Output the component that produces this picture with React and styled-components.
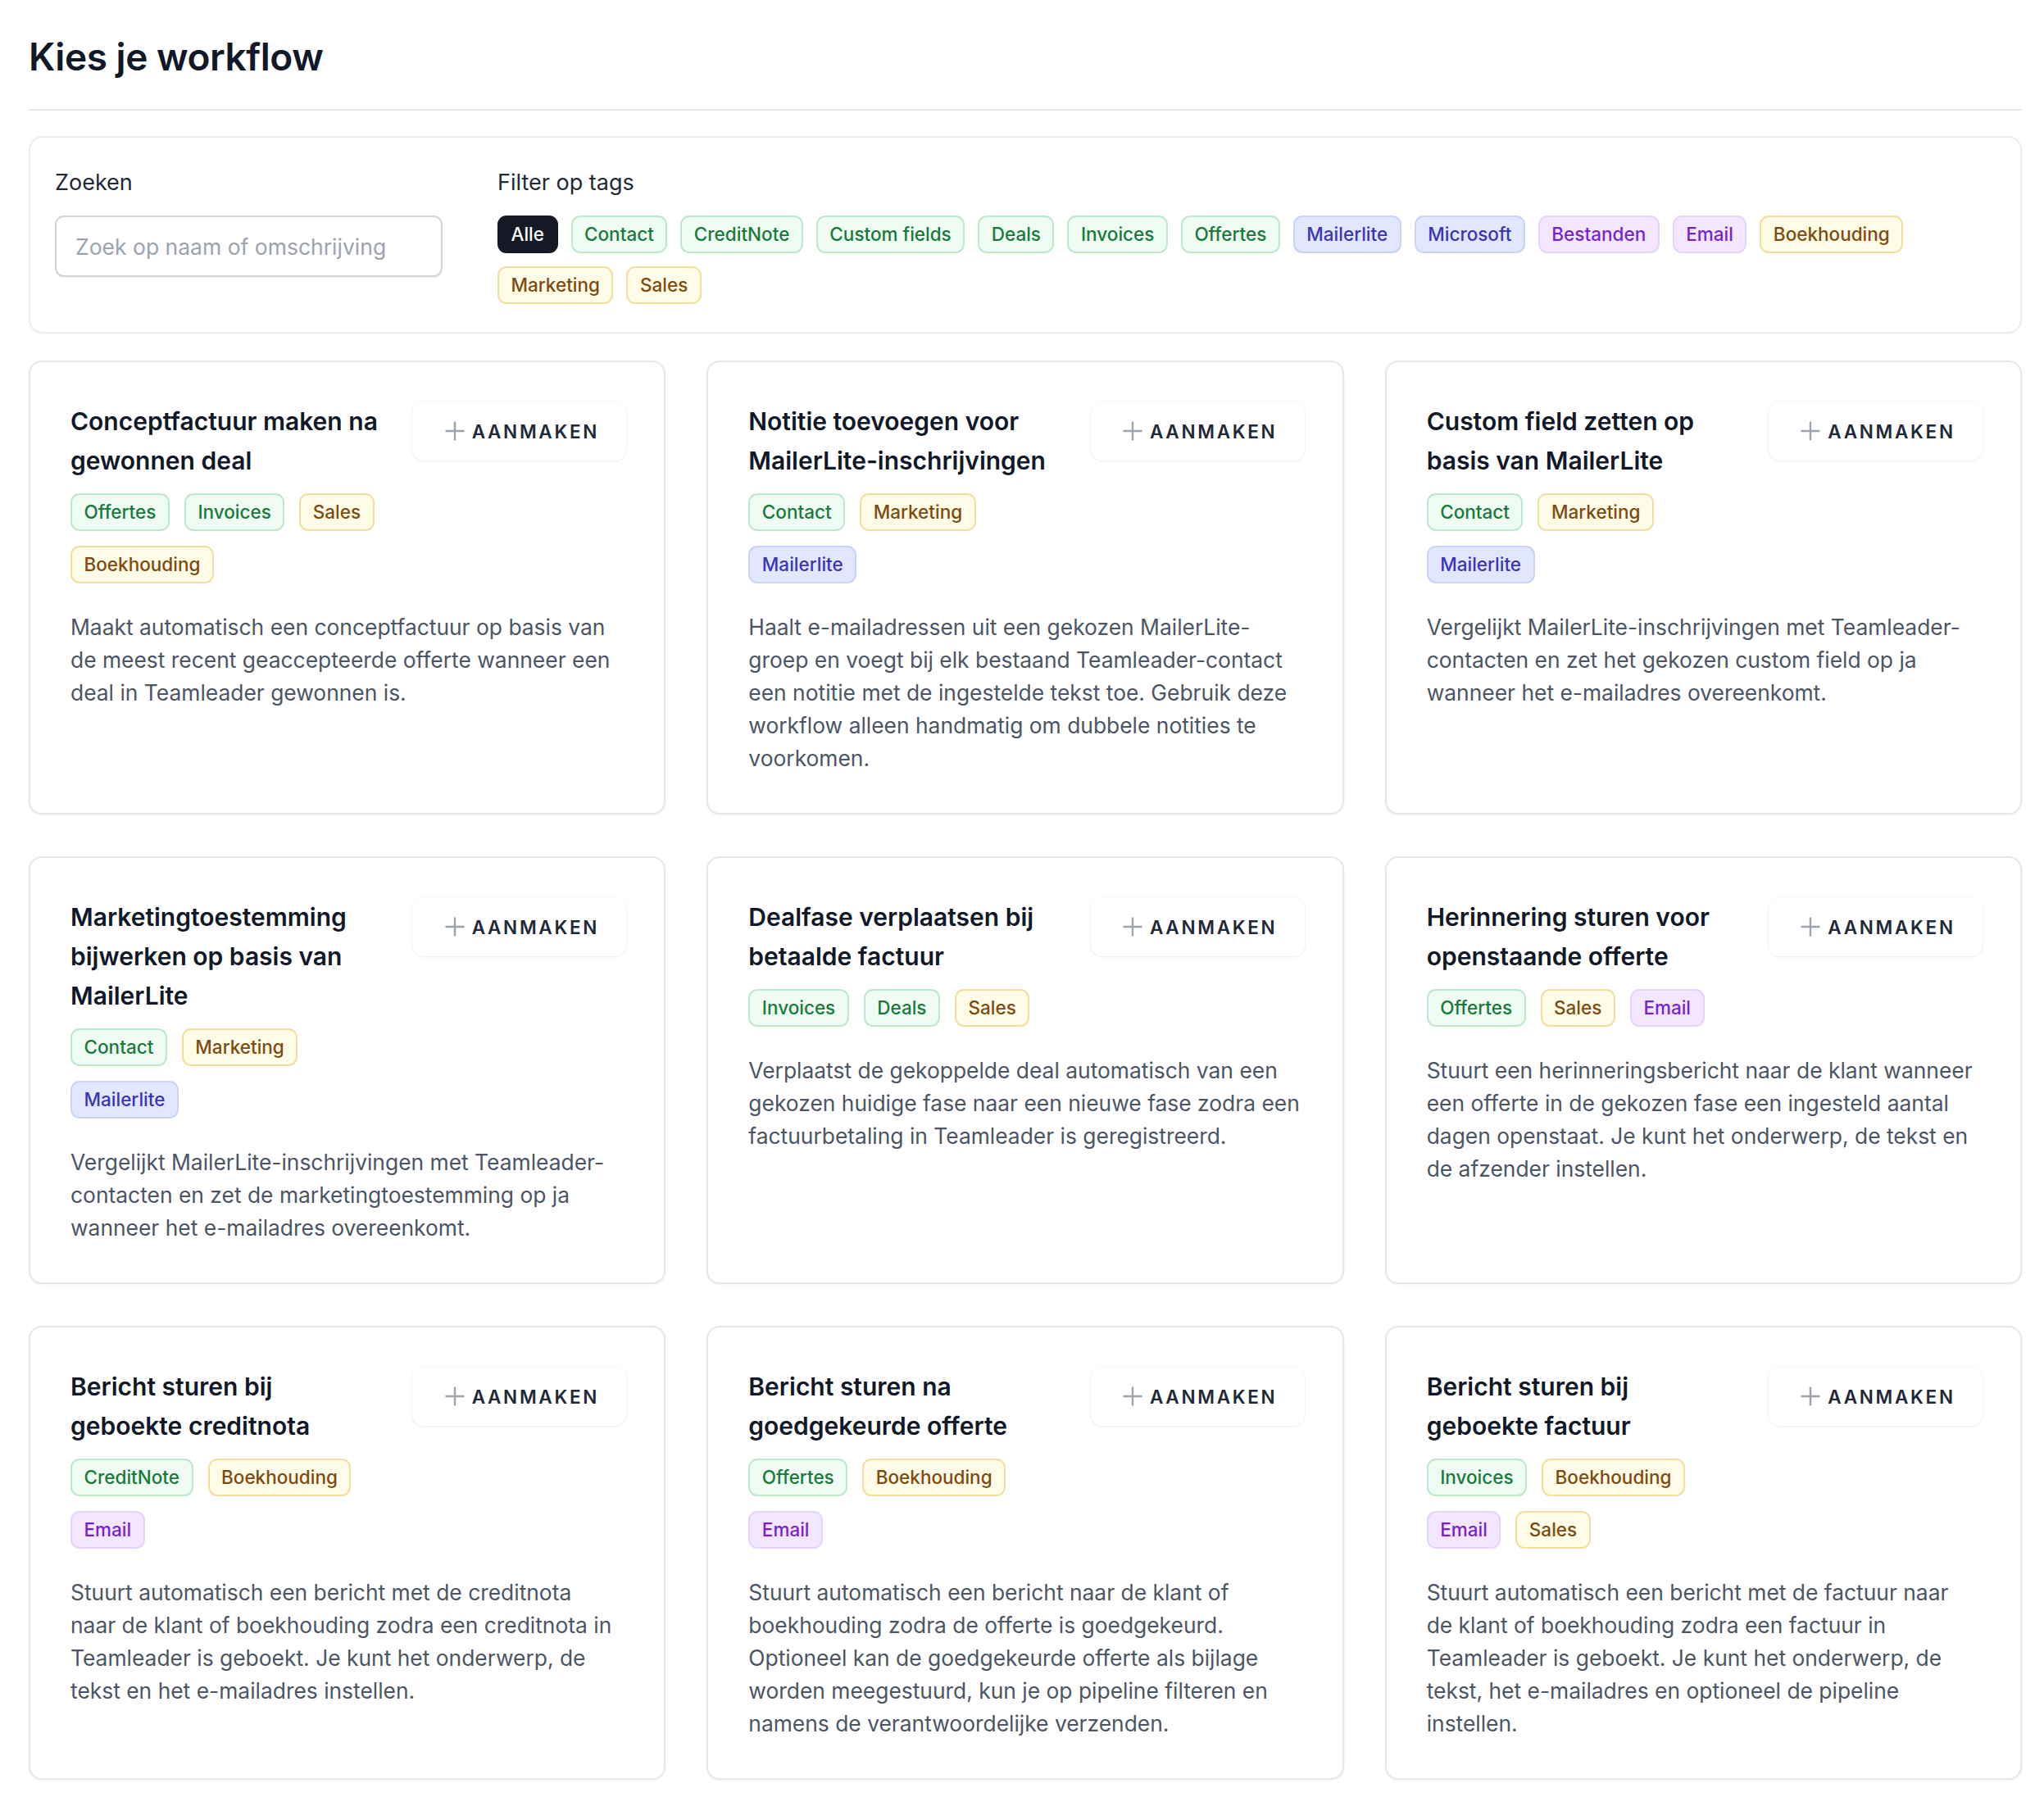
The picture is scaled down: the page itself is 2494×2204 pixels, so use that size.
import React from 'react'
import styled, { createGlobalStyle, css } from 'styled-components'

const GlobalStyle = createGlobalStyle`
  body {
    margin: 0;
    background: #ffffff;
    font-family: Inter, "Noto Sans", sans-serif;
    color: #111827;
  }
  * {
    box-sizing: border-box;
  }
`

const palettes = {
  green: css`
    background: #eefcf3;
    border-color: #bce8cb;
    color: #177a3a;
  `,
  blue: css`
    background: #e0e7ff;
    border-color: #c9d2fb;
    color: #3b34b8;
  `,
  purple: css`
    background: #f3e6ff;
    border-color: #e6d3fb;
    color: #7a1fd0;
  `,
  yellow: css`
    background: #fefbe6;
    border-color: #f2df9f;
    color: #7e4a0f;
  `,
  dark: css`
    background: #141925;
    border-color: #141925;
    color: #ffffff;
  `,
}

const tagColor = {
  Contact: 'green',
  CreditNote: 'green',
  'Custom fields': 'green',
  Deals: 'green',
  Invoices: 'green',
  Offertes: 'green',
  Mailerlite: 'blue',
  Microsoft: 'blue',
  Bestanden: 'purple',
  Email: 'purple',
  Boekhouding: 'yellow',
  Marketing: 'yellow',
  Sales: 'yellow',
}

const filterTags = [
  'Contact',
  'CreditNote',
  'Custom fields',
  'Deals',
  'Invoices',
  'Offertes',
  'Mailerlite',
  'Microsoft',
  'Bestanden',
  'Email',
  'Boekhouding',
  'Marketing',
  'Sales',
]

// descriptions are kept per line so they break exactly where the design does
const workflows = [
  {
    title: 'Conceptfactuur maken na gewonnen deal',
    tags: ['Offertes', 'Invoices', 'Sales', 'Boekhouding'],
    lines: [
      'Maakt automatisch een conceptfactuur op basis van',
      'de meest recent geaccepteerde offerte wanneer een',
      'deal in Teamleader gewonnen is.',
    ],
  },
  {
    title: 'Notitie toevoegen voor MailerLite-inschrijvingen',
    tags: ['Contact', 'Marketing', 'Mailerlite'],
    lines: [
      'Haalt e-mailadressen uit een gekozen MailerLite-',
      'groep en voegt bij elk bestaand Teamleader-contact',
      'een notitie met de ingestelde tekst toe. Gebruik deze',
      'workflow alleen handmatig om dubbele notities te',
      'voorkomen.',
    ],
  },
  {
    title: 'Custom field zetten op basis van MailerLite',
    tags: ['Contact', 'Marketing', 'Mailerlite'],
    lines: [
      'Vergelijkt MailerLite-inschrijvingen met Teamleader-',
      'contacten en zet het gekozen custom field op ja',
      'wanneer het e-mailadres overeenkomt.',
    ],
  },
  {
    title: 'Marketingtoestemming bijwerken op basis van MailerLite',
    tags: ['Contact', 'Marketing', 'Mailerlite'],
    lines: [
      'Vergelijkt MailerLite-inschrijvingen met Teamleader-',
      'contacten en zet de marketingtoestemming op ja',
      'wanneer het e-mailadres overeenkomt.',
    ],
  },
  {
    title: 'Dealfase verplaatsen bij betaalde factuur',
    tags: ['Invoices', 'Deals', 'Sales'],
    lines: [
      'Verplaatst de gekoppelde deal automatisch van een',
      'gekozen huidige fase naar een nieuwe fase zodra een',
      'factuurbetaling in Teamleader is geregistreerd.',
    ],
  },
  {
    title: 'Herinnering sturen voor openstaande offerte',
    tags: ['Offertes', 'Sales', 'Email'],
    lines: [
      'Stuurt een herinneringsbericht naar de klant wanneer',
      'een offerte in de gekozen fase een ingesteld aantal',
      'dagen openstaat. Je kunt het onderwerp, de tekst en',
      'de afzender instellen.',
    ],
  },
  {
    title: 'Bericht sturen bij geboekte creditnota',
    tags: ['CreditNote', 'Boekhouding', 'Email'],
    lines: [
      'Stuurt automatisch een bericht met de creditnota',
      'naar de klant of boekhouding zodra een creditnota in',
      'Teamleader is geboekt. Je kunt het onderwerp, de',
      'tekst en het e-mailadres instellen.',
    ],
  },
  {
    title: 'Bericht sturen na goedgekeurde offerte',
    tags: ['Offertes', 'Boekhouding', 'Email'],
    lines: [
      'Stuurt automatisch een bericht naar de klant of',
      'boekhouding zodra de offerte is goedgekeurd.',
      'Optioneel kan de goedgekeurde offerte als bijlage',
      'worden meegestuurd, kun je op pipeline filteren en',
      'namens de verantwoordelijke verzenden.',
    ],
  },
  {
    title: 'Bericht sturen bij geboekte factuur',
    tags: ['Invoices', 'Boekhouding', 'Email', 'Sales'],
    lines: [
      'Stuurt automatisch een bericht met de factuur naar',
      'de klant of boekhouding zodra een factuur in',
      'Teamleader is geboekt. Je kunt het onderwerp, de',
      'tekst, het e-mailadres en optioneel de pipeline',
      'instellen.',
    ],
  },
]

const Page = styled.main`
  padding: 39px 27px 34px 35px;
`

const Heading = styled.h1`
  margin: 0;
  padding-bottom: 34px;
  border-bottom: 2px solid #e5e7eb;
  font-size: 46px;
  line-height: 60px;
  font-weight: 600;
  letter-spacing: -0.01em;
  color: #111827;
`

const FilterPanel = styled.section`
  margin-top: 31px;
  display: flex;
  gap: 67px;
  padding: 35px 31px 34px 30px;
  border: 2px solid #ececf0;
  border-radius: 17px;
  box-shadow: 0 1px 2px rgba(17, 24, 39, 0.04);
`

const SearchField = styled.div`
  flex: none;
  width: 473px;
`

const TagField = styled.div`
  flex: 1;
`

const Label = styled.div`
  font-size: 27px;
  line-height: 40px;
  color: #1f2937;
  margin-bottom: 20px;
`

const SearchInput = styled.input`
  width: 100%;
  height: 75px;
  padding: 0 23px;
  border: 2px solid #d1d5db;
  border-radius: 11px;
  font-family: inherit;
  font-size: 26.5px;
  color: #111827;
  box-shadow: 0 1px 2px rgba(17, 24, 39, 0.06);
  outline: none;

  &::placeholder {
    color: #9ca3af;
  }
`

const TagRow = styled.div`
  display: flex;
  flex-wrap: wrap;
  gap: ${props => props.gap}px;
`

const Tag = styled.span`
  display: inline-flex;
  align-items: center;
  padding: 5px 14.5px;
  border: 2px solid;
  border-radius: 11px;
  font-size: 22.5px;
  line-height: 32px;
  font-weight: 500;
  white-space: nowrap;
  ${props => palettes[props.tone]}
`

const Grid = styled.div`
  margin-top: 33px;
  display: grid;
  grid-template-columns: repeat(3, 1fr);
  gap: 51px 50px;
`

const Card = styled.article`
  display: flex;
  flex-direction: column;
  padding: 48px 46px 47px 49px;
  border: 2px solid #e5e7eb;
  border-radius: 16px;
  box-shadow: 0 1px 3px rgba(17, 24, 39, 0.06);
  background: #ffffff;
`

const CardHead = styled.div`
  display: flex;
  align-items: flex-start;
  gap: 32px;
`

const CardMain = styled.div`
  flex: 1;
  min-width: 0;
`

const CardTitle = styled.h2`
  margin: 0;
  font-size: 30px;
  line-height: 48px;
  font-weight: 600;
  color: #111827;
`

const CreateButton = styled.button`
  flex: none;
  display: flex;
  align-items: center;
  justify-content: center;
  gap: 9px;
  width: 261px;
  height: 72px;
  padding: 0 0 0 6px;
  border: none;
  border-radius: 14px;
  background: #ffffff;
  box-shadow: 0 1px 3px rgba(17, 24, 39, 0.07), 0 0 0 1px rgba(17, 24, 39, 0.025);
  font-family: inherit;
  font-size: 22.5px;
  font-weight: 600;
  letter-spacing: 0.12em;
  color: #1f2937;
  cursor: pointer;
`

const CardTags = styled(TagRow)`
  margin-top: 16px;
`

const Description = styled.p`
  margin: 33px 0 0;
  font-size: 26.4px;
  line-height: 40px;
  color: #4b5563;
`

const Line = styled.span`
  display: block;
  white-space: nowrap;
`

const PlusIcon = () => (
  <svg width="24" height="24" viewBox="0 0 24 24" fill="none">
    <path d="M12 0.5v23M0.5 12h23" stroke="#9ca3af" strokeWidth="2.4" />
  </svg>
)

const WorkflowCard = ({ title, tags, lines }) => (
  <Card>
    <CardHead>
      <CardMain>
        <CardTitle>{title}</CardTitle>
        <CardTags gap={18}>
          {tags.map(tag => (
            <Tag key={tag} tone={tagColor[tag]}>
              {tag}
            </Tag>
          ))}
        </CardTags>
      </CardMain>
      <CreateButton>
        <PlusIcon />
        AANMAKEN
      </CreateButton>
    </CardHead>
    <Description>
      {lines.map(line => (
        <Line key={line}>{line}</Line>
      ))}
    </Description>
  </Card>
)

const App = () => (
  <>
    <GlobalStyle />
    <Page>
      <Heading>Kies je workflow</Heading>
      <FilterPanel>
        <SearchField>
          <Label>Zoeken</Label>
          <SearchInput placeholder="Zoek op naam of omschrijving" />
        </SearchField>
        <TagField>
          <Label>Filter op tags</Label>
          <TagRow gap={16}>
            <Tag tone="dark">Alle</Tag>
            {filterTags.map(tag => (
              <Tag key={tag} tone={tagColor[tag]}>
                {tag}
              </Tag>
            ))}
          </TagRow>
        </TagField>
      </FilterPanel>
      <Grid>
        {workflows.map(workflow => (
          <WorkflowCard key={workflow.title} {...workflow} />
        ))}
      </Grid>
    </Page>
  </>
)

export default App
